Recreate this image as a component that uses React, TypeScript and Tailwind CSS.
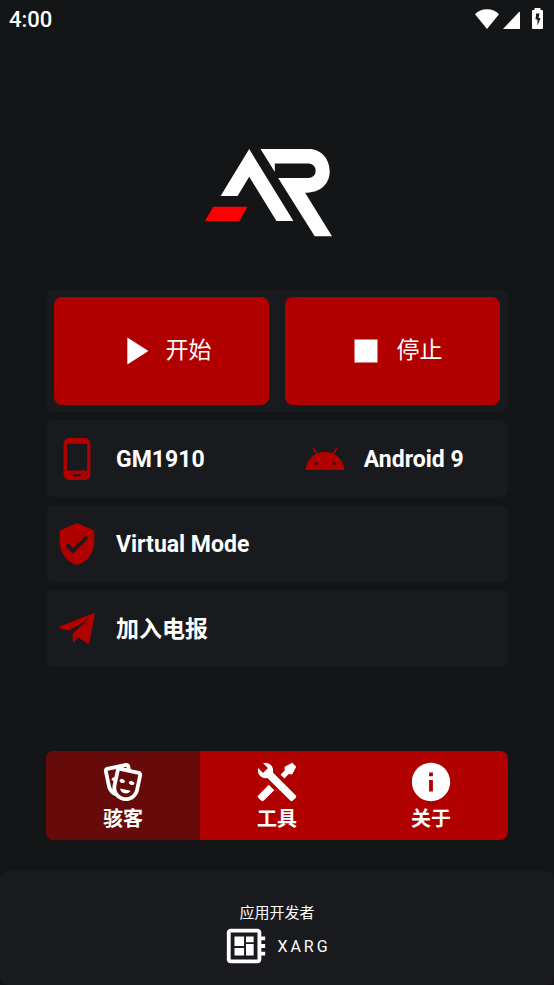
import { useState } from "react";
import type { ReactNode } from "react";
import { MdDeveloperBoard, MdInfo, MdPhoneAndroid, MdPlayArrow, MdStop, MdVerifiedUser } from "react-icons/md";

type Tab = { id: string; label: string; icon: ReactNode };

const MASKS =
  "M8.11,19.45C5.94,18.65 4.22,16.78 3.71,14.35L2.05,6.54C1.81,5.46 2.5,4.4 3.58,4.17L13.35,2.1L13.38,2.09C14.45,1.88 15.5,2.57 15.72,3.63L16.07,5.3L20.42,6.23H20.45C21.5,6.47 22.18,7.53 21.96,8.59L20.3,16.41C19.5,20.18 15.78,22.6 12,21.79C10.42,21.46 9.08,20.61 8.11,19.45V19.45M20,8.18L10.23,6.1L8.57,13.92V13.95C8,16.63 9.73,19.27 12.42,19.84C15.11,20.41 17.77,18.69 18.34,16L20,8.18M16,16.5C15.37,17.57 14.11,18.16 12.83,17.89C11.56,17.62 10.65,16.57 10.5,15.34L16,16.5M8.47,5.17L4,6.13L5.66,13.94L5.67,13.97C5.82,14.68 6.12,15.32 6.53,15.87C6.43,15.1 6.45,14.3 6.62,13.5L7.05,11.5C6.6,11.42 6.21,11.17 6,10.81C6.06,10.2 6.56,9.66 7.25,9.5C7.33,9.5 7.4,9.5 7.5,9.5L8.28,5.69C8.32,5.5 8.38,5.33 8.47,5.17M15.03,12.23C15.35,11.7 16.03,11.42 16.72,11.57C17.41,11.71 17.91,12.24 18,12.86C17.67,13.38 17,13.66 16.3,13.5C15.61,13.37 15.11,12.84 15.03,12.23M10.15,11.19C10.47,10.66 11.14,10.38 11.83,10.53C12.5,10.67 13.03,11.21 13.11,11.82C12.78,12.34 12.11,12.63 11.42,12.5C10.73,12.33 10.23,11.8 10.15,11.19M11.97,4.43L13.93,4.85L13.77,4.05L11.97,4.43Z";

const TOOLS =
  "M21.71 20.29L20.29 21.71A1 1 0 0 1 18.88 21.71L7 9.85A3.81 3.81 0 0 1 6 10A4 4 0 0 1 2.22 4.7L4.76 7.24L5.29 6.71L6.71 5.29L7.24 4.76L4.7 2.22A4 4 0 0 1 10 6A3.81 3.81 0 0 1 9.85 7L21.71 18.88A1 1 0 0 1 21.71 20.29M2.29 18.88A1 1 0 0 0 2.29 20.29L3.71 21.71A1 1 0 0 0 5.12 21.71L10.59 16.25L7.76 13.42M20 2L16 4V6L13.83 8.17L15.83 10.17L18 8H20L22 4Z";

function Glyph({ d }: { d: string }) {
  return (
    <svg viewBox="0 0 24 24" fill="currentColor" className="size-[46px]" aria-hidden="true">
      <path d={d} />
    </svg>
  );
}

const TABS: Tab[] = [
  { id: "hacker", label: "骇客", icon: <Glyph d={MASKS} /> },
  { id: "tools", label: "工具", icon: <Glyph d={TOOLS} /> },
  { id: "about", label: "关于", icon: <MdInfo className="size-[46px]" /> },
];

function StatusBar() {
  return (
    <header className="flex h-10 items-center justify-between pr-[10px] pl-[9px]">
      <span className="text-[22px] leading-6 font-medium">4:00</span>
      <svg viewBox="0 0 70 24" fill="currentColor" className="h-6 w-[70px]" aria-label="Wi-Fi, signal, charging">
        <path d="M13 21L1 6.300C4.200 3 8 1.300 13 1.300S21.800 3 25 6.300Z" />
        <path d="M29 21L45 4Q46 3.200 46 4.500V21Z" />
        <path
          fillRule="evenodd"
          d="M60.500 0h6v2h1.500a1 1 0 0 1 1 1v17a1 1 0 0 1-1 1h-9a1 1 0 0 1-1-1v-17a1 1 0 0 1 1-1h1.500zM62.200 5.500L61.500 11.500h2v6l3-7.500h-2l1-4.500z"
        />
      </svg>
    </header>
  );
}

function Logo() {
  return (
    <svg viewBox="45 42 382 264" className="h-[88px] w-[127px]" role="img" aria-label="AR">
      <path fill="#fff" d="M178 42L311 258H260L178 125L143 183H92Z" />
      <path fill="#fff" d="M212 42H358C394 42 420 72 420 109C420 145 394 173 346 173L427 304H375L265 129H356A22 22 0 0 0 356 85H255V111Z" />
      <path fill="#f00" d="M70 215H173L148 258H45Z" />
    </svg>
  );
}

// Just the robot head
function AndroidHead() {
  return (
    <svg viewBox="0 0 46 46" fill="currentColor" className="size-[46px] shrink-0" aria-hidden="true">
      <path
        fillRule="evenodd"
        d="M3.500 34C4.200 26.500 8.500 21 14 18L10.300 12.800L11.700 12L15.700 17.300C20.500 15.500 25.500 15.500 30.300 17.300L34.300 12L35.700 12.800L32 18C37.500 21 41.800 26.500 42.500 34ZM14 25.900a1.500 1.500 0 1 0 .01 3a1.500 1.500 0 1 0-.01-3M32 25.900a1.500 1.500 0 1 0 .01 3a1.500 1.500 0 1 0-.01-3"
      />
    </svg>
  );
}

function PaperPlane() {
  return (
    <svg viewBox="0 0 46 46" fill="currentColor" className="size-[46px] shrink-0" aria-hidden="true">
      <path d="M6.200 20.300L38.500 7.500Q41 6.800 40.600 9.300L35.500 36.300Q35 38.500 33 37.200L24.500 31.500L20.300 35.700Q18.700 37 18.700 35V27.500L34.500 13.300L15 24.500L6.200 22.500Q4.200 21.300 6.200 20.300Z" />
    </svg>
  );
}

function Item({ icon, children }: { icon: ReactNode; children: ReactNode }) {
  return (
    <div className="flex items-center gap-4">
      <span className="text-[#b00000]">{icon}</span>
      <span className="pt-0.5 text-[23px] leading-7 font-bold">{children}</span>
    </div>
  );
}

export default function App() {
  const [tab, setTab] = useState("hacker");

  return (
    <div className="flex min-h-screen flex-col bg-[#141517] font-['Roboto','Noto_Sans_CJK_SC',sans-serif] text-white">
      <StatusBar />

      <main className="flex flex-col px-[46px] pt-[109px]">
        <div className="flex justify-center pr-[18px]">
          <Logo />
        </div>

        <div className="mt-[53px] space-y-2">
          {/* Start / stop */}
          <section className="grid grid-cols-2 gap-4 rounded-lg bg-[#191a1d] px-2 py-[7px]">
            <button className="flex h-[108px] items-center justify-center gap-2 rounded-lg bg-[#b00000] text-[23px]">
              <MdPlayArrow className="size-[46px]" />
              开始
            </button>
            <button className="flex h-[108px] items-center justify-center gap-2 rounded-lg bg-[#b00000] text-[23px]">
              <MdStop className="size-[46px]" />
              停止
            </button>
          </section>

          {/* Device */}
          <section className="grid min-h-[77px] grid-cols-[5fr_4fr] items-center rounded-lg bg-[#191a1d] px-2">
            <Item icon={<MdPhoneAndroid className="size-[46px]" />}>GM1910</Item>
            <Item icon={<AndroidHead />}>Android 9</Item>
          </section>

          <section className="flex min-h-[77px] items-center rounded-lg bg-[#191a1d] px-2">
            <Item icon={<MdVerifiedUser className="size-[46px]" />}>Virtual Mode</Item>
          </section>

          <a href="#telegram" className="flex min-h-[77px] items-center rounded-lg bg-[#191a1d] px-2">
            <Item icon={<PaperPlane />}>加入电报</Item>
          </a>
        </div>

        <nav className="mt-[84px] grid grid-cols-3 overflow-hidden rounded-lg bg-[#b00000]">
          {TABS.map((t) => (
            <button
              key={t.id}
              onClick={() => setTab(t.id)}
              aria-current={tab === t.id}
              className={`flex flex-col items-center pt-2 pb-[7px] text-xl leading-7 font-bold ${
                tab === t.id ? "bg-[#660a0a]" : ""
              }`}
            >
              {t.icon}
              {t.label}
            </button>
          ))}
        </nav>
      </main>

      <footer className="mt-[31px] flex grow flex-col items-center rounded-lg bg-[#191a1d] pt-8 pb-[15px]">
        <p className="text-[15px] leading-5">应用开发者</p>
        <div className="flex items-center gap-2">
          <MdDeveloperBoard className="size-[46px]" />
          <span className="pt-0.5 text-base leading-5 tracking-[3px]">XARG</span>
        </div>
      </footer>
    </div>
  );
}
